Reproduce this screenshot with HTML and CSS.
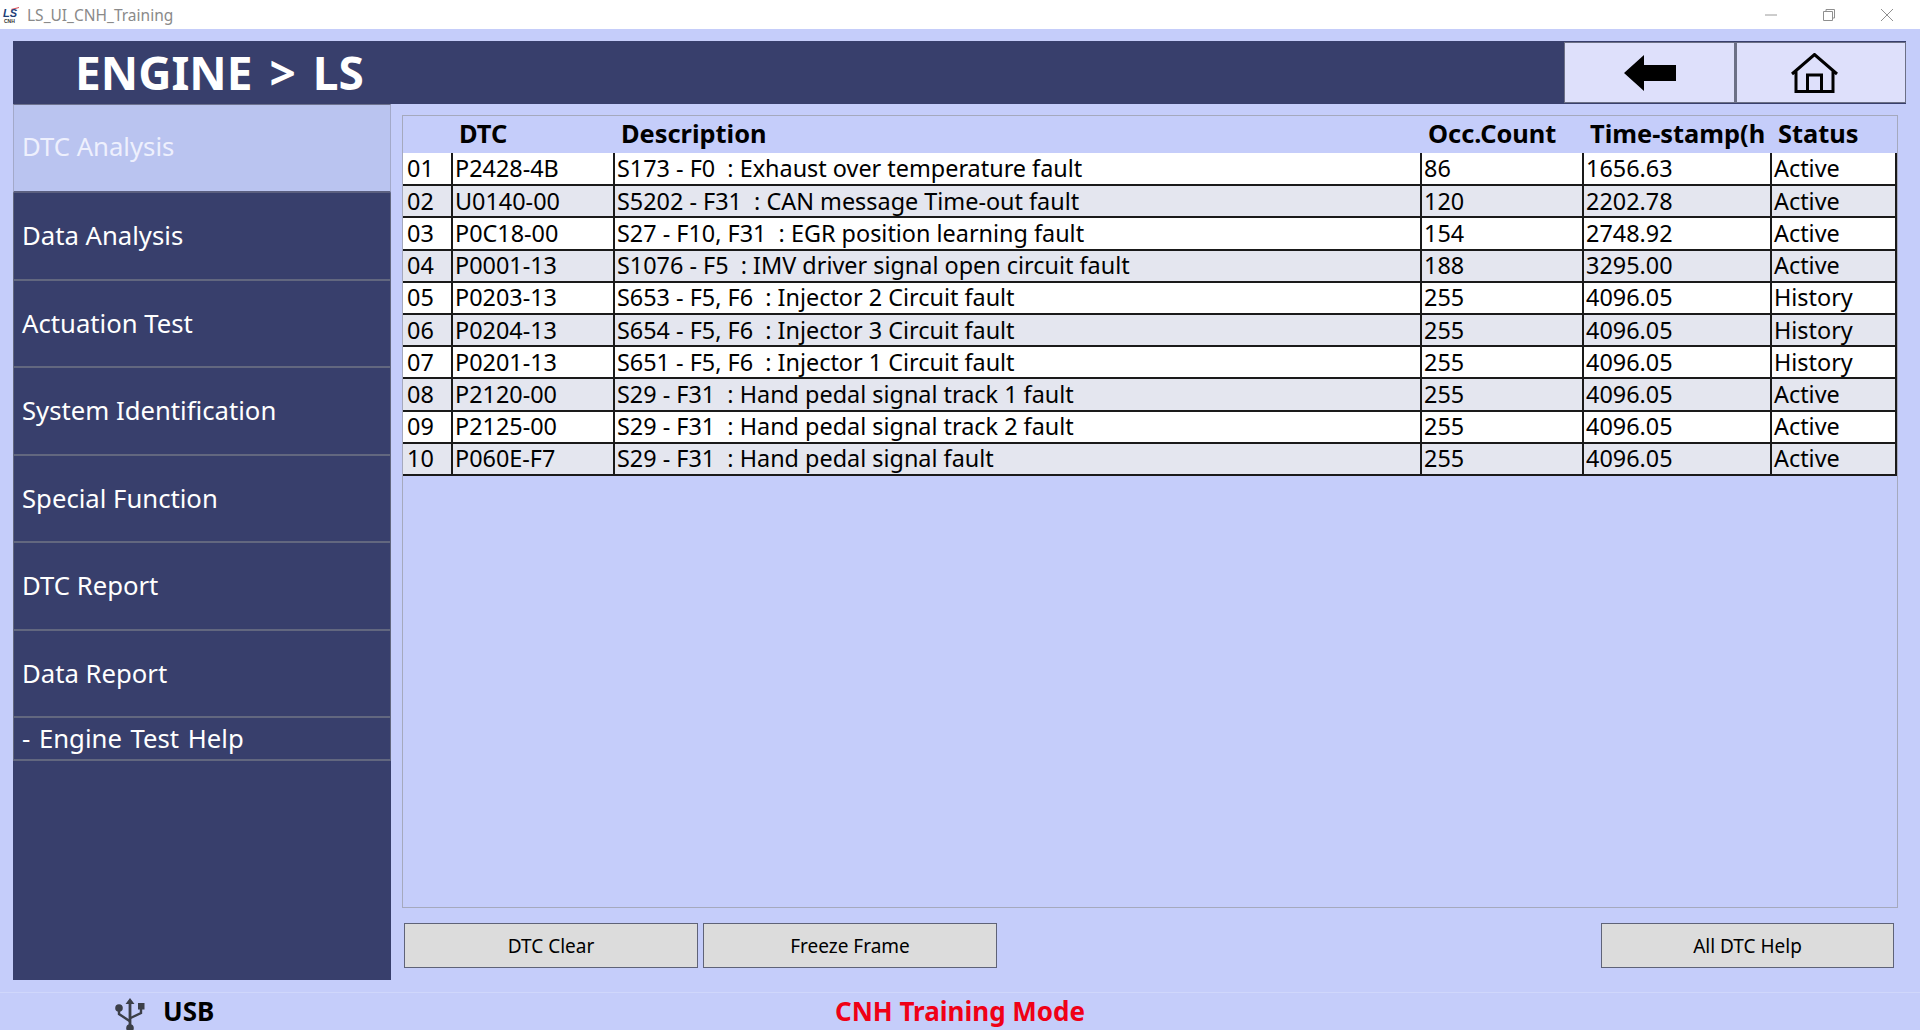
FILE: index.html

```html
<!DOCTYPE html>
<html lang="en">
<head>
    <meta charset="UTF-8">
    <meta name="viewport" content="width=device-width, initial-scale=1.0">
    <title>LS_UI_CNH_Training</title>
    <link rel="stylesheet" href="styles.css">
</head>
<body>
    <div class="titlebar">
        <svg class="app-logo" width="18" height="18" viewBox="0 0 18 18">
            <path d="M9 3 L17 1 L17 2 L10 4 Z" fill="#d8505a"/>
            <text x="1" y="11" class="logo-ls">LS</text>
            <text x="2" y="17" class="logo-cnh">CNH</text>
        </svg>
        <span class="app-name">LS_UI_CNH_Training</span>
        <div class="window-btns">
            <svg width="14" height="14" viewBox="0 0 14 14"><path d="M1 7 H13" stroke="#9a9a9a" stroke-width="1" fill="none"/></svg>
            <svg width="14" height="14" viewBox="0 0 14 14"><path d="M1.5 3.5 H10.5 V12.5 H1.5 Z M4 3.5 V1.5 H12.5 V10 H10.5" stroke="#8f8f8f" stroke-width="1" fill="none"/></svg>
            <svg width="14" height="14" viewBox="0 0 14 14"><path d="M1 1 L13 13 M13 1 L1 13" stroke="#8f8f8f" stroke-width="1" fill="none"/></svg>
        </div>
    </div>

    <div class="app">
        <div class="header">
            <h1>ENGINE &gt; LS</h1>
            <button class="nav-btn">
                <svg width="52" height="36" viewBox="0 0 52 36"><path d="M0 18 L20 0 V10 H52 V26 H20 V36 Z" fill="#000"/></svg>
            </button>
            <button class="nav-btn home">
                <svg width="47" height="40" viewBox="0 0 47 40"><path d="M1 21 L23.5 1.5 L46 21 M5 18 V38.5 H42 V18 M16.5 38.5 V22 H30.5 V38.5" fill="none" stroke="#000" stroke-width="3"/></svg>
            </button>
        </div>

        <div class="content">
            <div class="sidebar">
                <div class="side-item active">DTC Analysis</div>
                <div class="side-item">Data Analysis</div>
                <div class="side-item">Actuation Test</div>
                <div class="side-item">System Identification</div>
                <div class="side-item">Special Function</div>
                <div class="side-item">DTC Report</div>
                <div class="side-item">Data Report</div>
                <div class="side-item small">- Engine Test Help</div>
            </div>

            <div class="main">
                <div class="table-panel">
                    <table class="dtc-table">
                        <thead>
                            <tr>
                                <th></th>
                                <th>DTC</th>
                                <th>Description</th>
                                <th>Occ.Count</th>
                                <th>Time-stamp(h</th>
                                <th>Status</th>
                            </tr>
                        </thead>
                        <tbody>
                            <tr><td>01</td><td>P2428-4B</td><td>S173 - F0  : Exhaust over temperature fault</td><td>86</td><td>1656.63</td><td>Active</td></tr>
                            <tr><td>02</td><td>U0140-00</td><td>S5202 - F31  : CAN message Time-out fault</td><td>120</td><td>2202.78</td><td>Active</td></tr>
                            <tr><td>03</td><td>P0C18-00</td><td>S27 - F10, F31  : EGR position learning fault</td><td>154</td><td>2748.92</td><td>Active</td></tr>
                            <tr><td>04</td><td>P0001-13</td><td>S1076 - F5  : IMV driver signal open circuit fault</td><td>188</td><td>3295.00</td><td>Active</td></tr>
                            <tr><td>05</td><td>P0203-13</td><td>S653 - F5, F6  : Injector 2 Circuit fault</td><td>255</td><td>4096.05</td><td>History</td></tr>
                            <tr><td>06</td><td>P0204-13</td><td>S654 - F5, F6  : Injector 3 Circuit fault</td><td>255</td><td>4096.05</td><td>History</td></tr>
                            <tr><td>07</td><td>P0201-13</td><td>S651 - F5, F6  : Injector 1 Circuit fault</td><td>255</td><td>4096.05</td><td>History</td></tr>
                            <tr><td>08</td><td>P2120-00</td><td>S29 - F31  : Hand pedal signal track 1 fault</td><td>255</td><td>4096.05</td><td>Active</td></tr>
                            <tr><td>09</td><td>P2125-00</td><td>S29 - F31  : Hand pedal signal track 2 fault</td><td>255</td><td>4096.05</td><td>Active</td></tr>
                            <tr><td>10</td><td>P060E-F7</td><td>S29 - F31  : Hand pedal signal fault</td><td>255</td><td>4096.05</td><td>Active</td></tr>
                        </tbody>
                    </table>
                </div>
                <div class="actions">
                    <button class="action-btn">DTC Clear</button>
                    <button class="action-btn">Freeze Frame</button>
                    <button class="action-btn help">All DTC Help</button>
                </div>
            </div>
        </div>
    </div>

    <div class="footer">
        <div class="usb">
            <svg width="32" height="36" viewBox="0 0 32 36">
                <g fill="#3c3f48">
                    <path d="M16 1 L20.5 7 H17.4 V28 H14.6 V7 H11.5 Z"/>
                    <circle cx="16" cy="31" r="3.8"/>
                    <circle cx="5" cy="11" r="3.8"/>
                    <rect x="24" y="6" width="6.5" height="6.5"/>
                </g>
                <path d="M5 12 V17 L15.5 24 M27 12 V16 L16.5 21" fill="none" stroke="#3c3f48" stroke-width="2.4"/>
            </svg>
            <span>USB</span>
        </div>
        <div class="mode">CNH Training Mode</div>
    </div>
</body>
</html>
```

FILE: styles.css

```css
* {
    box-sizing: border-box;
}

body {
    margin: 0;
    height: 1030px;
    overflow: hidden;
    display: flex;
    flex-direction: column;
    background: #c5cdfa;
    font-family: "Noto Sans", "Open Sans", sans-serif;
    color: #000;
}

.titlebar {
    height: 29px;
    background: #fff;
    display: flex;
    align-items: center;
    padding-left: 2px;
}

.app-logo {
    margin-right: 7px;
}

.logo-ls {
    font-family: "Liberation Sans", sans-serif;
    font-size: 11px;
    font-weight: 700;
    font-style: italic;
    fill: #1e3f78;
}

.logo-cnh {
    font-family: "Liberation Sans", sans-serif;
    font-size: 5px;
    font-weight: 700;
    fill: #333;
}

.app-name {
    font-size: 15.5px;
    color: #8a8a8a;
}

.window-btns {
    margin-left: auto;
    margin-right: 26px;
    display: flex;
    gap: 44px;
}

.app {
    flex: 1;
    display: flex;
    flex-direction: column;
    padding: 12px 14px 12px 13px;
}

.header {
    height: 63px;
    background: #383f6c;
    display: flex;
    align-items: stretch;
    flex-shrink: 0;
}

.header h1 {
    margin: 0;
    flex: 1;
    padding-left: 62px;
    font-size: 46px;
    line-height: 62px;
    font-weight: 700;
    word-spacing: 5px;
    color: #fff;
}

.nav-btn {
    width: 171px;
    margin: 1px 0;
    padding: 0;
    background: #dee0fb;
    border: 1px solid #6c7086;
    display: flex;
    align-items: center;
    justify-content: center;
}

.nav-btn + .nav-btn {
    border-left-width: 2px;
}

.nav-btn.home {
    padding-right: 14px;
}

.content {
    flex: 1;
    display: flex;
    min-height: 0;
}

.sidebar {
    width: 378px;
    background: #383f6c;
    flex-shrink: 0;
    display: flex;
    flex-direction: column;
}

.side-item {
    height: 87.5px;
    padding-left: 8px;
    display: flex;
    align-items: center;
    font-size: 25.7px;
    color: #fff;
    border: 1px solid #62677f;
    border-bottom-width: 2px;
    border-top-width: 0;
}

.side-item.active {
    height: 89px;
    padding-bottom: 3px;
    background: #bac4f0;
    color: #eef0fd;
    border-color: #a3a9c9;
    border-bottom-color: #5c6080;
    border-top: 1px solid #6d7290;
}

.side-item.small {
    height: 43px;
    word-spacing: 2px;
}

.main {
    flex: 1;
    display: flex;
    flex-direction: column;
    padding: 11px 8px 0 11px;
}

.table-panel {
    height: 793px;
    flex-shrink: 0;
    border: 1px solid #a5a9bd;
}

.dtc-table {
    width: 1494px;
    table-layout: fixed;
    border-collapse: collapse;
}

.dtc-table th {
    height: 37px;
    padding: 0 0 3px 7px;
    text-align: left;
    font-size: 25.4px;
    font-weight: 700;
    white-space: nowrap;
}

.dtc-table th:nth-child(1),
.dtc-table td:nth-child(1) {
    width: 49px;
}

.dtc-table th:nth-child(2),
.dtc-table td:nth-child(2) {
    width: 162px;
}

.dtc-table th:nth-child(3),
.dtc-table td:nth-child(3) {
    width: 807px;
}

.dtc-table th:nth-child(4),
.dtc-table td:nth-child(4) {
    width: 162px;
}

.dtc-table th:nth-child(5),
.dtc-table td:nth-child(5) {
    width: 188px;
}

.dtc-table td {
    height: 32.2px;
    padding: 0 0 1px 2px;
    font-size: 23.4px;
    line-height: 28px;
    white-space: pre;
    overflow: hidden;
    background: #fff;
    border: 2px solid #1a1a1a;
}

.dtc-table td:first-child {
    border-left: 0;
    padding-left: 4px;
}

.dtc-table tbody tr:first-child td {
    border-top: 0;
}

.dtc-table tbody tr:nth-child(even) td {
    background: #e4e6ef;
}

.actions {
    display: flex;
    gap: 5px;
    padding: 15px 4px 0 2px;
}

.action-btn {
    width: 294px;
    height: 45px;
    background: #dcdcdc;
    border: 1px solid #5f6378;
    font-family: inherit;
    font-size: 19px;
    color: #000;
    padding: 0;
}

.action-btn.help {
    width: 293px;
    margin-left: auto;
}

.footer {
    height: 38px;
    flex-shrink: 0;
    padding-bottom: 8px;
    border-top: 1px solid #d0d7fb;
    display: grid;
    grid-template-columns: 1fr auto 1fr;
    align-items: center;
}

.usb {
    display: flex;
    align-items: center;
    gap: 17px;
    padding-left: 114px;
    font-size: 26px;
    font-weight: 700;
}

.usb svg {
    margin-bottom: -8px;
}

.mode {
    font-size: 26px;
    font-weight: 700;
    color: #f00016;
}
```
